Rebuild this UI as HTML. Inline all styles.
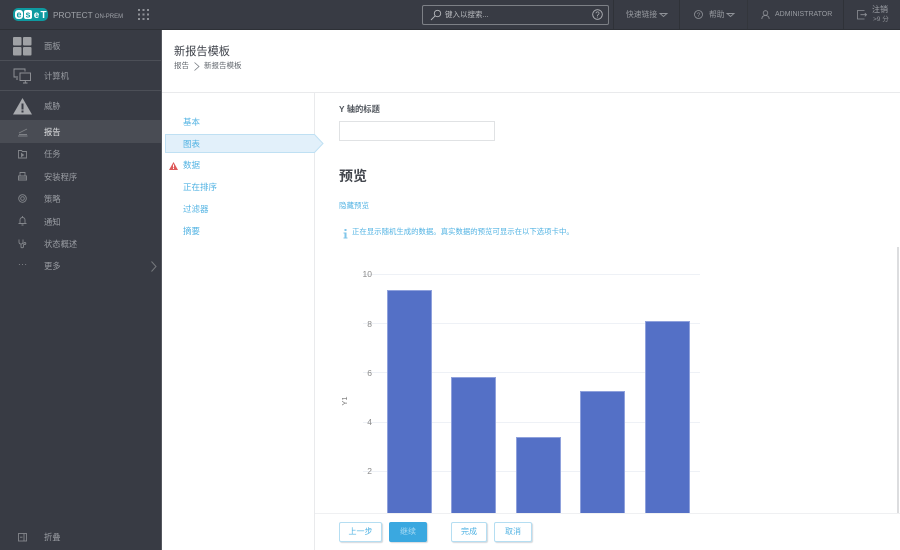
<!DOCTYPE html>
<html lang="zh"><head><meta charset="utf-8"><title>ESET PROTECT</title>
<style>
html,body{margin:0;padding:0;width:900px;height:550px;overflow:hidden;background:#fff}
body{position:relative;font-family:"Liberation Sans","Noto Sans CJK SC",sans-serif;font-size:9px;line-height:12px}
.a,.t{position:absolute}
.t{white-space:nowrap}
.nav{color:#9a9da3;font-size:8.300px}
.sep{position:absolute;height:1px;background:#4a4d55;left:0;width:161px}
.bl{color:#52b3e3;font-size:8.500px}
.btn{position:absolute;top:522px;height:18px;line-height:18px;text-align:center;background:#fff;border:1px solid #b5def2;border-radius:2px;color:#52b3e3;font-size:8px;box-shadow:1px 1px 1px #d5d9dd;box-sizing:content-box}
.grid{position:absolute;left:363px;width:337px;height:1px;background:#eef1f6}
.bar{position:absolute;width:43px;background:#5470c6;border:1px solid #8fa1dc;border-bottom:0;box-sizing:content-box}
.yl{position:absolute;width:12px;text-align:right;left:360px;color:#8a8a8a;font-size:8.500px}
svg{position:absolute;overflow:visible}
</style></head><body>
<!-- top bar -->
<div class="a" style="left:0;top:0;width:900px;height:30px;background:#383b44;border-bottom:1px solid #2d3036;box-sizing:border-box"></div>
<!-- logo -->
<svg style="left:12px;top:6px" width="38" height="16" viewBox="0 0 38 16"><rect x="1" y="2" width="35" height="13" rx="5" fill="#0e9aa0"/><rect x="3" y="4" width="8" height="9" rx="3" fill="#fff"/><rect x="12" y="4" width="8" height="9" rx="2" fill="#fff"/><text x="7" y="11.500" font-size="9" font-weight="700" text-anchor="middle" fill="#0e9aa0" font-family="Liberation Sans">e</text><text x="16" y="11.500" font-size="9" font-weight="700" text-anchor="middle" fill="#0e9aa0" font-family="Liberation Sans">s</text><text x="24.500" y="12" font-size="10" font-weight="700" text-anchor="middle" fill="#fff" font-family="Liberation Sans">e</text><text x="31.500" y="12" font-size="10" font-weight="700" text-anchor="middle" fill="#fff" font-family="Liberation Sans">T</text></svg>
<div class="t" style="left:53px;top:9px;color:#a0a3a9;font-size:8.300px">PROTECT <span style="font-size:6px">ON-PREM</span></div>
<svg style="left:138px;top:9px" width="12" height="12" fill="#8f9298"><rect x="0" y="0" width="2" height="2"/><rect x="4.500" y="0" width="2" height="2"/><rect x="9" y="0" width="2" height="2"/><rect x="0" y="4.500" width="2" height="2"/><rect x="4.500" y="4.500" width="2" height="2"/><rect x="9" y="4.500" width="2" height="2"/><rect x="0" y="9" width="2" height="2"/><rect x="4.500" y="9" width="2" height="2"/><rect x="9" y="9" width="2" height="2"/></svg>
<!-- search -->
<div class="a" style="left:422px;top:5px;width:187px;height:20px;border:1px solid #7d8086;border-radius:2px;box-sizing:border-box"></div>
<svg style="left:430px;top:9px" width="12" height="12" fill="none" stroke="#b5b7bb" stroke-width=".9"><circle cx="7.500" cy="4.500" r="3.200"/><path d="M5.200 6.800L1 11"/></svg>
<div class="t" style="left:445px;top:9px;color:#b8babe;font-size:7.500px">键入以搜索...</div>
<svg style="left:592px;top:9px" width="12" height="12" fill="none" stroke="#b5b7bb" stroke-width=".9"><circle cx="5.500" cy="5.500" r="4.800"/><text x="5.500" y="8.500" font-size="8" text-anchor="middle" fill="#b5b7bb" stroke="none" font-family="Liberation Sans">?</text></svg>
<div class="a" style="left:613px;top:0;width:1px;height:29px;background:#2f3238"></div>
<div class="t" style="left:626px;top:9px;color:#989ba1;font-size:7.800px">快速链接</div>
<svg style="left:660px;top:13px" width="8" height="4" fill="none" stroke="#8f9298" stroke-width=".9"><path d="M0 .5H7L3.500 3.500Z"/></svg>
<div class="a" style="left:679px;top:0;width:1px;height:29px;background:#2f3238"></div>
<svg style="left:694px;top:10px" width="9" height="9" fill="none" stroke="#8f9298" stroke-width=".8"><circle cx="4.500" cy="4.500" r="4"/><text x="4.500" y="7" font-size="6.500" text-anchor="middle" fill="#8f9298" stroke="none" font-family="Liberation Sans">?</text></svg>
<div class="t" style="left:709px;top:9px;color:#989ba1;font-size:7.800px">帮助</div>
<svg style="left:727px;top:13px" width="8" height="4" fill="none" stroke="#8f9298" stroke-width=".9"><path d="M0 .5H7L3.500 3.500Z"/></svg>
<div class="a" style="left:747px;top:0;width:1px;height:29px;background:#33363c"></div>
<svg style="left:761px;top:10px" width="9" height="10" fill="none" stroke="#8f9298" stroke-width=".8"><circle cx="4.500" cy="3" r="2.300"/><path d="M.8 9C1 6.500 2.500 5.500 4.500 5.500S8 6.500 8.200 9"/></svg>
<div class="t" style="left:775px;top:9px;color:#989ba1;font-size:7px">ADMINISTRATOR</div>
<div class="a" style="left:843px;top:0;width:1px;height:29px;background:#2f3238"></div>
<svg style="left:857px;top:10px" width="11" height="10" fill="none" stroke="#8f9298" stroke-width=".8"><path d="M7.500 .5H.5V9H7.500M3.500 4.700H9.500M7.800 3L9.500 4.700L7.800 6.400"/></svg>
<div class="t" style="left:872px;top:4px;color:#a0a3a9;font-size:8px">注销</div>
<div class="t" style="left:873px;top:14px;color:#8f9298;font-size:6.500px">&gt;9 分</div>

<!-- sidebar -->
<div class="a" style="left:0;top:30px;width:161px;height:520px;background:#383b44"></div>
<div class="a" style="left:161px;top:30px;width:1px;height:520px;background:#55585f"></div>
<div class="sep" style="top:60px;background:#4c4f57"></div>
<div class="sep" style="top:90px;background:#4c4f57"></div>
<div class="a" style="left:0;top:120px;width:161px;height:23px;background:#494c54"></div>
<svg style="left:13px;top:37px" width="19" height="19" fill="#9fa1a5"><rect width="8.500" height="8.500" rx="1"/><rect x="10" width="8.500" height="8.500" rx="1"/><rect y="10" width="8.500" height="8.500" rx="1"/><rect x="10" y="10" width="8.500" height="8.500" rx="1"/></svg>
<div class="t nav" style="left:44px;top:40px">面板</div>
<svg style="left:13px;top:68px" width="19" height="16" fill="none" stroke="#95979c" stroke-width=".9"><path d="M5 9H1V1H12V3.500"/><rect x="7" y="5" width="10.500" height="7.500"/><path d="M12.300 12.500V15M10 15H14.500M3 11H5"/></svg>
<div class="t nav" style="left:44px;top:70px">计算机</div>
<svg style="left:13px;top:98px" width="19" height="17"><path d="M9.500 0L19 16.500H0Z" fill="#a8aaae"/><rect x="8.500" y="5.500" width="2" height="6" fill="#383b44"/><rect x="8.500" y="12.500" width="2" height="2" fill="#383b44"/></svg>
<div class="t nav" style="left:44px;top:100px">威胁</div>

<svg style="left:18px;top:128px" width="10" height="9" fill="none" stroke="#7f8287" stroke-width=".9"><path d="M0 8H9.500M1 5L9 1M1 6.500H9"/></svg>
<div class="t" style="left:44px;top:126px;color:#dfe0e2;font-size:8.300px">报告</div>
<svg style="left:18px;top:150px" width="9" height="9" fill="none" stroke="#84878c" stroke-width=".9"><path d="M.5 .5H3.500L4.500 1.500H8.500V8H.5Z"/><path d="M3.500 3.500L5.500 5L3.500 6.500Z" fill="#84878c"/></svg>
<div class="t nav" style="left:44px;top:148px">任务</div>
<svg style="left:18px;top:172px" width="9" height="9" fill="none" stroke="#84878c" stroke-width=".9"><path d="M2 4V.5H7V4M.5 4H8.500V8H.5ZM.5 6H8.500"/></svg>
<div class="t nav" style="left:44px;top:171px">安装程序</div>
<svg style="left:18px;top:194px" width="9" height="9" fill="none" stroke="#84878c" stroke-width=".9"><circle cx="4.500" cy="4.500" r="3.800"/><circle cx="4.500" cy="4.500" r="1.800"/></svg>
<div class="t nav" style="left:44px;top:193px">策略</div>
<svg style="left:18px;top:216px" width="9" height="10" fill="none" stroke="#84878c" stroke-width=".9"><path d="M2 7.500V4A2.500 2.500 0 0 1 7 4V7.500ZM.5 7.500H8.500M4.500 1V0M3.500 9H5.500"/></svg>
<div class="t nav" style="left:44px;top:216px">通知</div>
<svg style="left:18px;top:239px" width="9" height="10" fill="none" stroke="#84878c" stroke-width=".9"><path d="M1 .5V3C1 4.500 2 5 3 5S5 4.500 5 3V.5M3 5V8C3 9 5 9 5.500 8V5.500"/><circle cx="6.800" cy="4.500" r="1"/></svg>
<div class="t nav" style="left:44px;top:238px">状态概述</div>
<div class="t" style="left:18px;top:259px;color:#989a9e;font-size:8px;letter-spacing:.5px">···</div>
<div class="t nav" style="left:44px;top:260px">更多</div>
<svg style="left:151px;top:261px" width="6" height="11" fill="none" stroke="#75787d"><path d="M.5 .5L5 5.500L.5 10.500"/></svg>
<svg style="left:18px;top:533px" width="9" height="9" fill="none" stroke="#84878c" stroke-width=".9"><rect x=".5" y=".5" width="8" height="7.500"/><path d="M6 .5V8M2 4.200H4.500"/></svg>
<div class="t nav" style="left:44px;top:531px">折叠</div>

<!-- header -->
<div class="t" style="left:174px;top:45px;color:#3d4149;font-size:11.200px;line-height:14px">新报告模板</div>
<div class="t" style="left:174px;top:60px;color:#62676e;font-size:7.500px">报告</div>
<svg style="left:194px;top:62px" width="6" height="9" fill="none" stroke="#777c83" stroke-width=".8"><path d="M.5 .5L5 4.500L.5 8.500"/></svg>
<div class="t" style="left:204px;top:60px;color:#62676e;font-size:7.500px">新报告模板</div>
<div class="a" style="left:162px;top:92px;width:738px;height:1px;background:#e9eaec"></div>
<div class="a" style="left:314px;top:93px;width:1px;height:457px;background:#e9eaec"></div>

<!-- wizard nav -->
<div class="t bl" style="left:183px;top:116px">基本</div>
<svg style="left:165px;top:134px" width="159" height="20"><path d="M.5 .5H149.500L158 9.500L149.500 18.500H.5Z" fill="#e2f0fa" stroke="#bfe0f3"/></svg>
<div class="t bl" style="left:183px;top:138px">图表</div>
<svg style="left:169px;top:162px" width="9" height="8"><path d="M4.500 0L9 8H0Z" fill="#de5a5a"/><rect x="4" y="2.500" width="1" height="3" fill="#fff"/><rect x="4" y="6" width="1" height="1" fill="#fff"/></svg>
<div class="t bl" style="left:183px;top:159px">数据</div>
<div class="t bl" style="left:183px;top:181px">正在排序</div>
<div class="t bl" style="left:183px;top:203px">过滤器</div>
<div class="t bl" style="left:183px;top:225px">摘要</div>

<!-- form -->
<div class="t" style="left:339px;top:103px;color:#50555c;font-size:8.300px;font-weight:700">Y 轴的标题</div>
<div class="a" style="left:339px;top:121px;width:156px;height:20px;border:1px solid #e0e2e4;box-sizing:border-box;background:#fff"></div>
<div class="t" style="left:339px;top:168px;color:#42464d;font-size:14px;line-height:17px;font-weight:700">预览</div>
<div class="t" style="left:339px;top:200px;color:#52b3e3;font-size:7.500px">隐藏预览</div>
<svg style="left:343px;top:229px" width="5" height="10" fill="#80c6ea"><rect x="1.500" y="0" width="2" height="2"/><path d="M.5 3.500H3.500V8.500H4.500V9.500H.5V8.500H1.500V4.500H.5Z"/></svg>
<div class="t" style="left:352px;top:226px;color:#52b3e3;font-size:7.400px">正在显示随机生成的数据。真实数据的预览可显示在以下选项卡中。</div>

<!-- chart -->
<div class="grid" style="top:274px"></div>
<div class="grid" style="top:323px"></div>
<div class="grid" style="top:372px"></div>
<div class="grid" style="top:422px"></div>
<div class="grid" style="top:471px"></div>
<div class="yl" style="top:268px">10</div>
<div class="yl" style="top:318px">8</div>
<div class="yl" style="top:367px">6</div>
<div class="yl" style="top:416px">4</div>
<div class="yl" style="top:465px">2</div>
<div class="t" style="left:339px;top:395px;color:#777;font-size:7.500px;transform:rotate(-90deg);width:12px;text-align:center">Y1</div>
<div class="bar" style="left:387px;top:290px;height:223px"></div>
<div class="bar" style="left:451px;top:377px;height:136px"></div>
<div class="bar" style="left:516px;top:437px;height:76px"></div>
<div class="bar" style="left:580px;top:391px;height:122px"></div>
<div class="bar" style="left:645px;top:321px;height:192px"></div>

<!-- scrollbar -->
<div class="a" style="left:897px;top:247px;width:2px;height:303px;background:#dcdddf"></div>

<!-- footer -->
<div class="a" style="left:315px;top:513px;width:585px;height:37px;background:#fff;border-top:1px solid #eff0f2;box-sizing:border-box"></div>
<div class="btn" style="left:339px;width:41px">上一步</div>
<div class="btn" style="left:389px;width:36px;background:#3aa8e0;border-color:#3aa8e0;color:#a9dbf4">继续</div>
<div class="btn" style="left:451px;width:34px">完成</div>
<div class="btn" style="left:494px;width:36px">取消</div>
</body></html>
